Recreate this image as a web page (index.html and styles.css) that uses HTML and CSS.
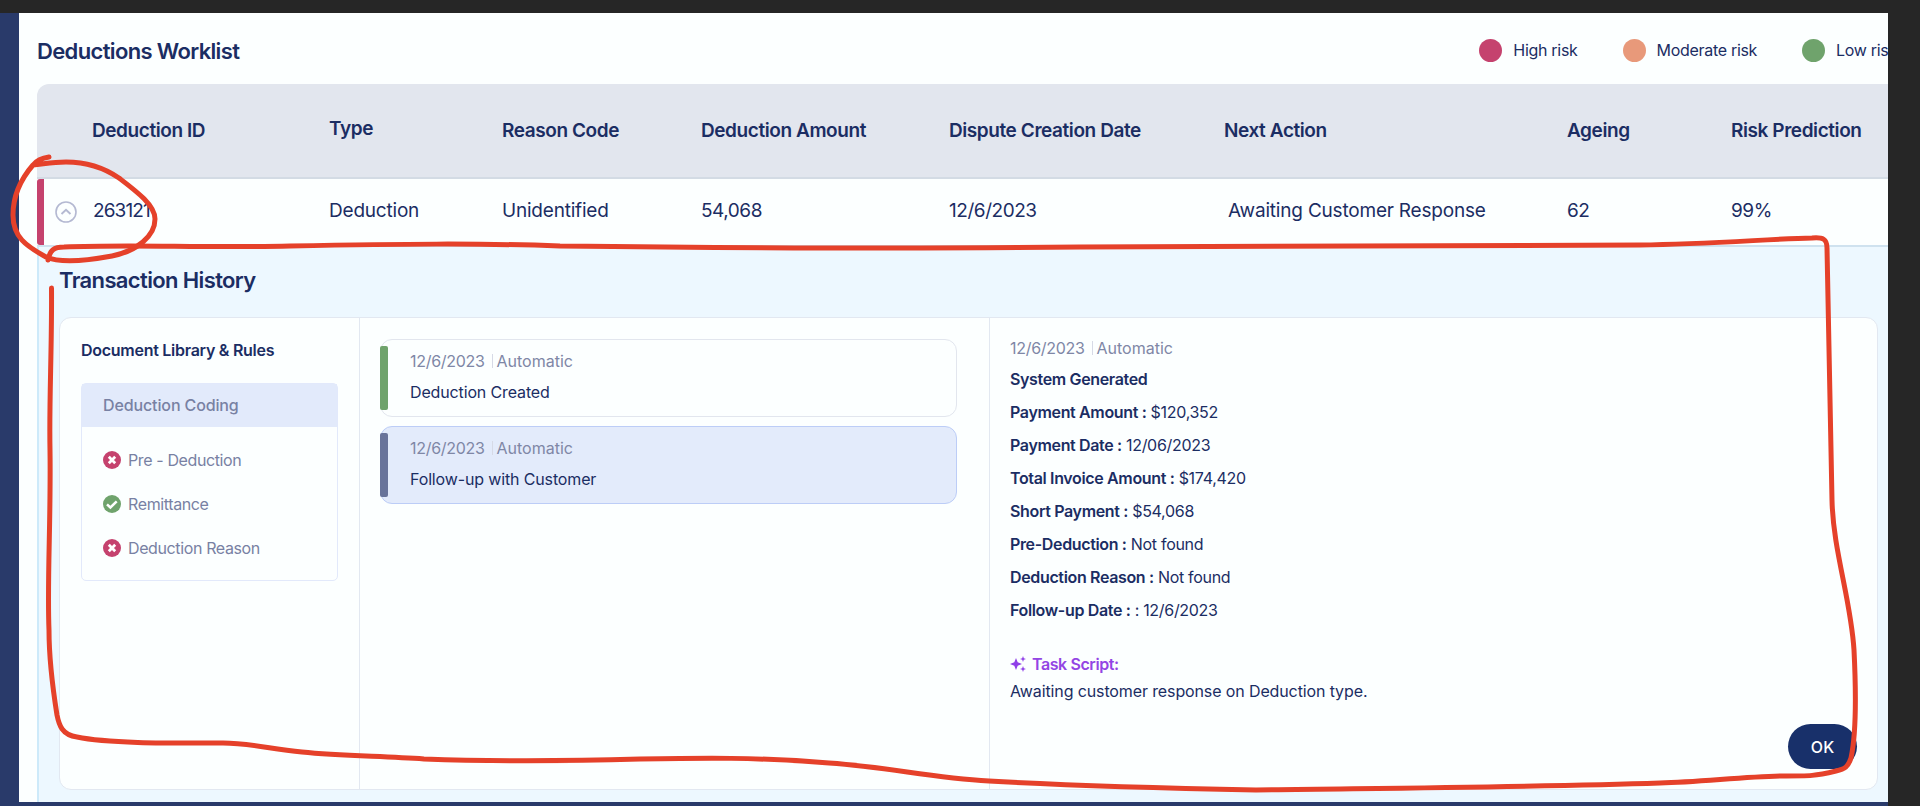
FILE: index.html
```html
<!DOCTYPE html>
<html lang="en">
<head>
  <meta charset="UTF-8" />
  <title>Deductions Worklist</title>
  <link rel="stylesheet" href="styles.css">
</head>
<body>
  <div class="app">
    <header class="top">
      <h1>Deductions Worklist</h1>
      <ul class="legend">
        <li><i class="dot high"></i>High risk</li>
        <li><i class="dot moderate"></i>Moderate risk</li>
        <li><i class="dot low"></i>Low risk</li>
      </ul>
    </header>

    <div class="cols thead">
      <span></span>
      <span class="th-id">Deduction ID</span>
      <span class="th-type">Type</span>
      <span>Reason Code</span>
      <span>Deduction Amount</span>
      <span>Dispute Creation Date</span>
      <span>Next Action</span>
      <span>Ageing</span>
      <span>Risk Prediction</span>
    </div>

    <div class="cols row">
      <span class="toggle">
        <svg width="22" height="22" viewBox="0 0 22 22" fill="none" stroke="#b4b9d2" stroke-width="1.6"><circle cx="11" cy="11" r="10"/><path d="M6.500 13 11 8.800 15.500 13" stroke-width="1.9"/></svg>
      </span>
      <span class="td-id">263121</span>
      <span>Deduction</span>
      <span>Unidentified</span>
      <span class="num">54,068</span>
      <span class="num">12/6/2023</span>
      <span class="td-action">Awaiting Customer Response</span>
      <span class="num">62</span>
      <span class="num">99%</span>
    </div>

    <section class="details">
      <h2>Transaction History</h2>
      <div class="panel">
        <div class="library">
          <h3>Document Library &amp; Rules</h3>
          <div class="rules">
            <div class="rules-head">Deduction Coding</div>
            <ul>
              <li><svg class="ico" viewBox="0 0 18 18"><circle cx="9" cy="9" r="9" fill="#c5426e"/><path d="M5.800 5.800l6.400 6.400M12.200 5.800l-6.400 6.400" stroke="#fff" stroke-width="2.8"/></svg>Pre - Deduction</li>
              <li><svg class="ico" viewBox="0 0 18 18"><circle cx="9" cy="9" r="9" fill="#6fa36c"/><path d="M4 9.300l3.400 3.200 6.300-6.200" fill="none" stroke="#fff" stroke-width="2.500"/></svg>Remittance</li>
              <li><svg class="ico" viewBox="0 0 18 18"><circle cx="9" cy="9" r="9" fill="#c5426e"/><path d="M5.800 5.800l6.400 6.400M12.200 5.800l-6.400 6.400" stroke="#fff" stroke-width="2.8"/></svg>Deduction Reason</li>
            </ul>
          </div>
        </div>

        <div class="events">
          <div class="event done">
            <p class="meta"><span>12/6/2023</span><span>Automatic</span></p>
            <p class="name">Deduction Created</p>
          </div>
          <div class="event active">
            <p class="meta"><span>12/6/2023</span><span>Automatic</span></p>
            <p class="name">Follow-up with Customer</p>
          </div>
        </div>

        <div class="info">
          <p class="meta"><span>12/6/2023</span><span>Automatic</span></p>
          <div class="lines">
            <p><b>System Generated</b></p>
            <p><b>Payment Amount :</b> $120,352</p>
            <p><b>Payment Date :</b> 12/06/2023</p>
            <p><b>Total Invoice Amount :</b> $174,420</p>
            <p><b>Short Payment :</b> $54,068</p>
            <p><b>Pre-Deduction :</b> Not found</p>
            <p><b>Deduction Reason :</b> Not found</p>
            <p><b>Follow-up Date :</b> : 12/6/2023</p>
          </div>
          <p class="task">
            <svg width="16" height="16" viewBox="0 0 16 16" fill="#8f3fe8"><path d="M6 2 7.700 6.300 12 8 7.700 9.700 6 14 4.300 9.700 0 8 4.300 6.300zM13 0l.8 2.200L16 3l-2.200.8L13 6l-.8-2.200L10 3l2.200-.8zM13 10l.8 2.200 2.200.8-2.200.8L13 16l-.8-2.200L10 13l2.200-.8z"/></svg>
            Task Script:
          </p>
          <p class="script">Awaiting customer response on Deduction type.</p>
          <button class="ok">OK</button>
        </div>
      </div>
    </section>
  </div>

  <!-- hand-drawn markup on top of the worklist -->
  <svg class="marks" viewBox="0 0 1920 806" fill="none" stroke="#e5412a" stroke-width="5" stroke-linecap="round" stroke-linejoin="round">
    <path d="M49 157C42 158 37 160 33 165C20 180 13 196 13 215C13 237 26 246 46 257C60 263 85 261 112 256C137 251 155 236 155 219C155 205 136 191 119 178C100 165 83 162 66 162C52 162 44 164 33 165"/>
    <path d="M48 260C50 250 54 247 64 247C130 244 200 248 290 246C400 244 480 243 560 246C740 248 900 249 1080 247C1240 245 1440 246 1640 245C1710 244 1770 239 1812 238C1823 237 1827 239 1827 248L1832 500C1833 550 1851 600 1854 650C1856 690 1856 735 1851 758C1848 767 1845 769 1836 771C1815 776 1812 776 1780 776C1740 777 1700 782 1660 783C1540 787 1400 788 1256 790C1160 788 1060 785 989 781C930 778 890 767 829 763C760 757 700 758 640 759C570 761 510 762 424 759C380 756 340 756 302 752C270 749 250 743 223 743C180 743 110 744 77 737C62 735 59 725 57 715C53 690 49 655 49 630C47 580 51 520 50 450C49 400 52 350 51.500 288"/>
  </svg>
</body>
</html>
```
FILE: styles.css
```css
*{box-sizing:border-box;margin:0;padding:0}
body{width:1920px;height:806px;overflow:hidden;background:#262626;padding-top:13px;font-family:Inter,"Liberation Sans",sans-serif;color:#1b2d63}
ul{list-style:none}
.app{width:1888px;height:789px;border-left:19px solid #293a6a;background:#fcffff;padding-left:18px;overflow:hidden;box-shadow:0 4px #293a6a}

.top{display:flex;justify-content:space-between;height:71px;align-items:center}
h1{font-size:22px;font-weight:600;letter-spacing:-.65px;margin-top:4px}
.legend{display:flex;flex:none;margin-right:-9px;gap:45px;font-size:16px;letter-spacing:-.3px;margin-top:3px}
.legend li{display:flex;align-items:center;gap:11px;white-space:nowrap}
.dot{width:23px;height:23px;border-radius:50%}
.high{background:#c5426e}
.moderate{background:#e8997a}
.low{background:#6fa36c}

.cols{display:grid;grid-template-columns:55px 237px 173px 199px 248px 275px 343px 164px 157px;align-items:center;white-space:nowrap}
.thead{height:95px;background:#e2e6ee;border-bottom:2px solid #d3dbe4;border-radius:12px 0 0 0;font-size:19px;font-weight:600;letter-spacing:-.42px;padding-bottom:1px}
.th-type{margin-top:-3px}
.row{height:66px;border-left:7px solid #c5426e;border-radius:3px;font-size:19px;letter-spacing:-.2px;grid-template-columns:48px 237px 173px 199px 248px 275px 343px 164px 157px;padding-bottom:3px}
.row .num{letter-spacing:-.45px}
.toggle{display:flex;padding:2px 0 0 11px}
.td-id{padding-left:1px;letter-spacing:-.9px}
.td-action{padding-left:4px}

.details{height:557px;background:#edf8ff;border-top:2px solid #cfe2ef;border-left:2px solid #cdeafa;padding:18px 10px 0 20px}
h2{font-size:22px;font-weight:600;letter-spacing:-.63px;line-height:30px}
.panel{display:grid;grid-template-columns:299px 630px 1fr;height:473px;margin-top:22px;background:#fcffff;border:1px solid #e2e8f1;border-radius:12px}
.panel > div + div{border-left:1px solid #e2e8f1}

.library{padding:20px 20px 0 21px}
h3{font-size:16px;font-weight:600;letter-spacing:-.27px;line-height:24px}
.rules{width:257px;height:198px;margin-top:21px;border:1px solid #e2e9fb;border-radius:5px;color:#7881a3;font-size:16px;letter-spacing:-.38px}
.rules-head{height:43px;line-height:42px;padding-left:21px;background:#e2eafb;font-weight:500;letter-spacing:-.12px}
.rules ul{padding:11px 0 0 21px}
.rules li{display:flex;align-items:center;height:44px;gap:7px}
.ico{width:18px;height:18px}

.events{padding:21px 20px;display:flex;flex-direction:column;gap:9px}
.event{position:relative;width:577px;height:78px;padding:9px 29px;border:1px solid #e2e6ee;border-radius:12px}
.event:before{content:"";position:absolute;left:-1px;top:6px;width:8px;height:64px;border-radius:2px;background:#6fa36c}
.active{background:#e3ebfb;border-color:#bccdf7}
.active:before{background:#69749a}
.meta{display:flex;font-size:16px;letter-spacing:-.3px;line-height:24px;color:#7f87a6}
.meta span + span{margin-left:7px;padding-left:5px;letter-spacing:0;background:linear-gradient(#d6dae6,#d6dae6) 0 5px/1px 14px no-repeat}
.name{font-size:16px;letter-spacing:-.14px;line-height:24px;margin-top:7px}

.info{padding:18px 21px 0 20px;font-size:16px;letter-spacing:-.3px;position:relative}
.lines{margin-top:3px}
.lines p{line-height:33px}
.info b{font-weight:600;letter-spacing:-.35px}
.task{display:flex;align-items:center;gap:6px;margin-top:25px;line-height:24px;font-weight:600;letter-spacing:-.42px;color:#9345e4}
.script{line-height:24px;margin-top:3px;letter-spacing:-.12px}
.ok{position:absolute;right:20px;bottom:20px;width:69px;height:45px;border:0;border-radius:23px;background:#18306a;color:#fff;font:500 16px Inter,sans-serif}

.marks{position:absolute;left:0;top:0;width:1920px;height:806px;pointer-events:none}
```
